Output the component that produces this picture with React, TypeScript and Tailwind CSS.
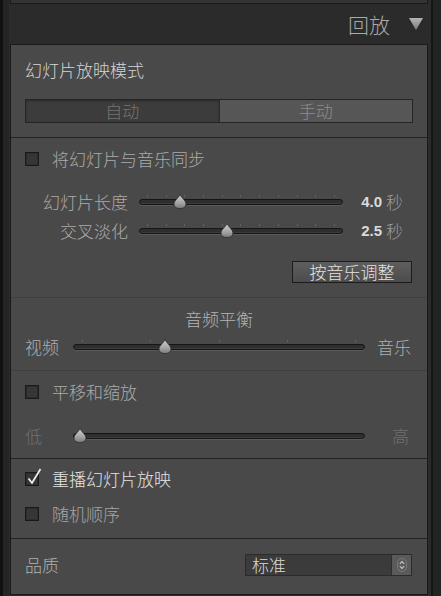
import React from 'react'

const CJK = "font-['Noto_Sans_CJK_SC','Noto_Sans',sans-serif]"

function Thumb({ pos }: { pos: number }) {
  return (
    <svg
      width="14"
      height="15"
      viewBox="0 0 14 15"
      className="absolute top-[2px]"
      style={{ left: `calc(${pos}% - 7px)` }}
    >
      <defs>
        <linearGradient id="thumbFill" x1="0" y1="0" x2="0" y2="1">
          <stop offset="0" stopColor="#d2d2d2" />
          <stop offset="0.6" stopColor="#a4a4a4" />
          <stop offset="1" stopColor="#7a7a7a" />
        </linearGradient>
      </defs>
      <path
        d="M7 0.5 C8 3.5 13 6.5 13 10 C13 13 10.5 14.5 7 14.5 C3.5 14.5 1 13 1 10 C1 6.5 6 3.5 7 0.5 Z"
        fill="url(#thumbFill)"
        stroke="#2a2a2a"
        strokeWidth="0.8"
      />
    </svg>
  )
}

function Slider({ pos, ticks = 0, inset = 8 }: { pos: number; ticks?: number; inset?: number }) {
  return (
    <div className="relative flex h-[20px] flex-1 items-center">
      {ticks > 0 && (
        <div
          className="absolute top-[3px] flex justify-between"
          style={{ left: inset, right: inset }}
        >
          {Array.from({ length: ticks }).map((_, i) => (
            <span key={i} className="h-[2px] w-px bg-[#626262]" />
          ))}
        </div>
      )}
      <div className="h-[6px] w-full rounded-full border border-[#161616] bg-[#2e2e2e] shadow-[0_1px_0_#5a5a5a,inset_0_-1px_0_#3c3c3c]" />
      <Thumb pos={pos} />
    </div>
  )
}

function Checkbox({ checked = false }: { checked?: boolean }) {
  return (
    <span className="relative h-[14px] w-[14px] shrink-0 border border-[#1a1a1a] bg-[#363636] shadow-[inset_0_0_0_1px_#2c2c2c]">
      {checked && (
        <svg width="20" height="20" viewBox="0 0 20 20" className="absolute -top-[6px] left-0">
          <path d="M2.5 11.5 L6 16 L14.5 2" fill="none" stroke="#ececec" strokeWidth="1.8" />
        </svg>
      )}
    </span>
  )
}

function SliderRow({ label, pos, value }: { label: string; pos: number; value: string }) {
  return (
    <div className="flex h-[20px] items-center">
      <span className="w-[103px] text-right leading-[20px] text-[#ababab]">{label}</span>
      <div className="ml-[11px] flex flex-1">
        <Slider pos={pos} ticks={11} />
      </div>
      <div className="flex w-[70px] items-center justify-end gap-[4px] pr-[10px]">
        <span className="font-['Liberation_Sans',sans-serif] text-[15px] font-bold text-[#dadada]">
          {value}
        </span>
        <span className="text-[#9c9c9c]">秒</span>
      </div>
    </div>
  )
}

export default function App() {
  return (
    <div className={`flex h-[596px] w-[441px] overflow-hidden bg-[#1e1e1e] text-[17px] font-light ${CJK}`}>
      <div className="w-[3px] bg-[#111111]" />
      <div className="w-[6px] bg-[#252525]" />

      {/* ── centre column ─────────────────────── */}
      <div className="flex w-[422px] flex-col bg-[#2b2b2b]">
        {/* bottom of the panel above */}
        <div className="ml-[1px] h-[4px] w-[418px] border-x border-b border-[#1a1a1a] bg-[#333333]" />

        {/* header */}
        <div className="flex h-[40px] items-center justify-end gap-[19px] pr-[8px]">
          <span className="text-[21px] leading-none text-[#a9a9a9]">回放</span>
          <svg width="14" height="12" viewBox="0 0 14 12">
            <defs>
              <linearGradient id="tri" x1="0" y1="0" x2="0" y2="1">
                <stop offset="0" stopColor="#b4b4b4" />
                <stop offset="1" stopColor="#7c7c7c" />
              </linearGradient>
            </defs>
            <path d="M0 0 H14 L7 12 Z" fill="url(#tri)" />
          </svg>
        </div>

        {/* panel */}
        <div className="ml-[1px] flex w-[418px] flex-col border border-[#1a1a1a] bg-[#494949]">
          {/* mode */}
          <div className="border-b border-[#232323] px-[14px] pb-[14px] pt-[15px]">
            <div className="leading-[20px] text-[#d4d4d4]">幻灯片放映模式</div>
            <div className="mt-[19px] flex h-[24px] border border-[#252525]">
              <div className="flex flex-1 items-center justify-center bg-[#3c3c3c] text-[#747474] shadow-[inset_0_1px_2px_#2a2a2a]">
                自动
              </div>
              <div className="w-px bg-[#2a2a2a]" />
              <div className="flex flex-1 items-center justify-center bg-[#565656] text-[#8c8c8c]">
                手动
              </div>
            </div>
          </div>

          {/* timing */}
          <div className="border-b border-[#3f3f3f] px-[14px] pb-[14px] pt-[11px]">
            <div className="flex h-[20px] items-center gap-[13px]">
              <Checkbox />
              <span className="leading-[20px] text-[#ababab]">将幻灯片与音乐同步</span>
            </div>
            <div className="mt-[23px]">
              <SliderRow label="幻灯片长度" pos={20} value="4.0" />
            </div>
            <div className="mt-[9px]">
              <SliderRow label="交叉淡化" pos={43} value="2.5" />
            </div>
            <div className="mt-[20px] flex justify-end pr-[1px]">
              <button className="flex h-[22px] w-[120px] items-center justify-center border border-[#1c1c1c] bg-gradient-to-b from-[#5e5e5e] to-[#4c4c4c] text-[#e2e2e2]">
                按音乐调整
              </button>
            </div>
          </div>

          {/* audio balance */}
          <div className="border-b border-[#3f3f3f] px-[14px] pb-[13px] pt-[11px]">
            <div className="text-center leading-[20px] text-[#b4b4b4]">音频平衡</div>
            <div className="mt-[8px] flex h-[20px] items-center pr-[2px]">
              <span className="w-[34px] text-[#b0b0b0]">视频</span>
              <div className="ml-[14px] mr-[12px] flex flex-1">
                <Slider pos={31.5} ticks={5} inset={9} />
              </div>
              <span className="w-[34px] text-right text-[#b0b0b0]">音乐</span>
            </div>
          </div>

          {/* pan and zoom */}
          <div className="border-b border-[#222222] px-[14px] pb-[12px] pt-[11px]">
            <div className="flex h-[20px] items-center gap-[13px]">
              <Checkbox />
              <span className="leading-[20px] text-[#ababab]">平移和缩放</span>
            </div>
            <div className="mt-[24px] flex h-[20px] items-center pr-[4px]">
              <span className="w-[34px] text-[#6f6f6f]">低</span>
              <div className="ml-[14px] mr-[12px] flex flex-1">
                <Slider pos={2.4} />
              </div>
              <span className="w-[32px] text-right text-[#6f6f6f]">高</span>
            </div>
          </div>

          {/* repeat / random */}
          <div className="border-b border-[#222222] px-[14px] pb-[14px] pt-[10px]">
            <div className="flex h-[20px] items-center gap-[13px]">
              <Checkbox checked />
              <span className="leading-[20px] text-[#e4e4e4]">重播幻灯片放映</span>
            </div>
            <div className="mt-[15px] flex h-[20px] items-center gap-[13px]">
              <Checkbox />
              <span className="leading-[20px] text-[#a6a6a6]">随机顺序</span>
            </div>
          </div>

          {/* quality */}
          <div className="flex items-center px-[14px] pb-[16px] pt-[13px]">
            <span className="text-[#b0b0b0]">品质</span>
            <div className="ml-auto mr-[1px] flex h-[22px] w-[167px] border border-[#2b2b2b] bg-[#3b3b3b]">
              <span className="flex-1 pl-[6px] leading-[20px] text-[#dcdcdc]">标准</span>
              <div className="flex w-[20px] items-center justify-center border-l border-[#2e2e2e] bg-[#5a5a5a]">
                <svg width="10" height="14" viewBox="0 0 10 14">
                  <rect x="0.5" y="0.5" width="9" height="13" rx="4.5" fill="none" stroke="#7a7a7a" />
                  <path d="M2.8 5.8 L5 3.6 L7.2 5.8" fill="none" stroke="#c8c8c8" strokeWidth="1.1" />
                  <path d="M2.8 8.2 L5 10.4 L7.2 8.2" fill="none" stroke="#c8c8c8" strokeWidth="1.1" />
                </svg>
              </div>
            </div>
          </div>
        </div>
      </div>

      <div className="w-[2px] bg-[#151515]" />
      <div className="flex-1 bg-[#232323]" />
    </div>
  )
}
